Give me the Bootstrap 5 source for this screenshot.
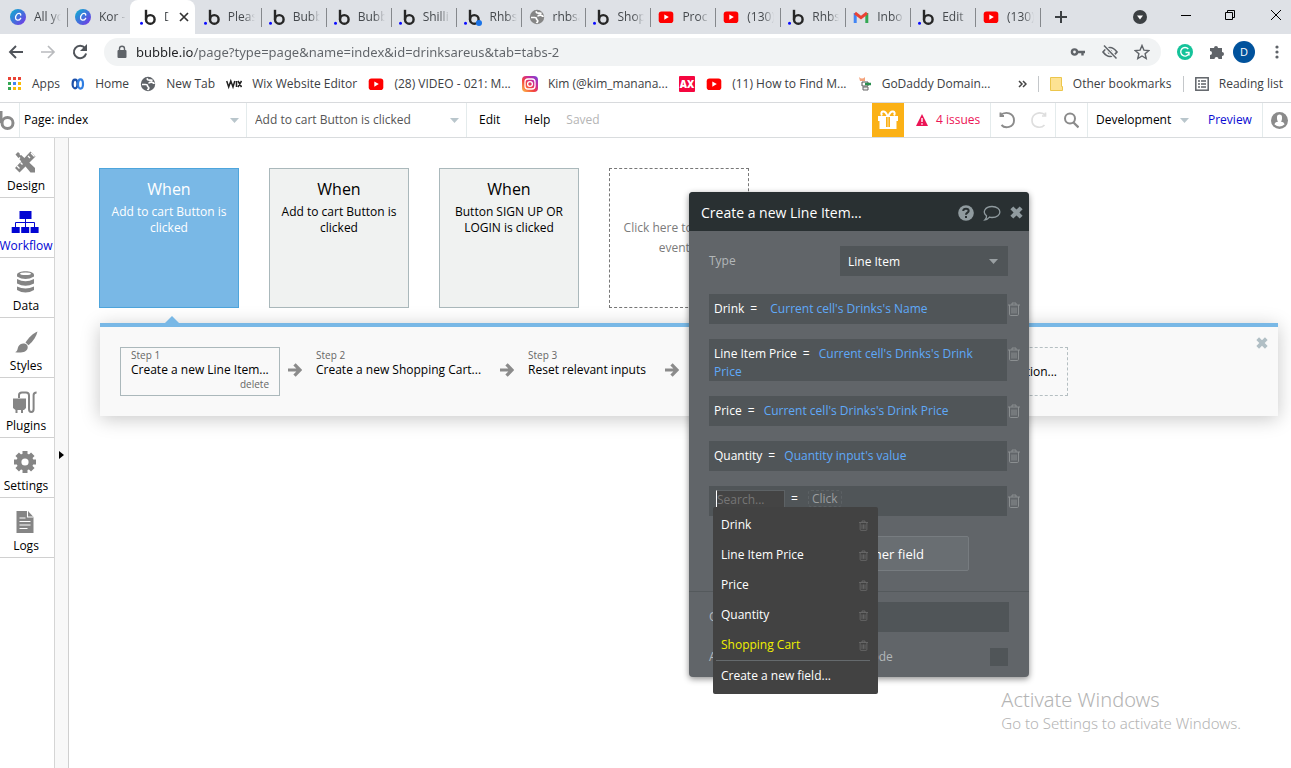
<!DOCTYPE html>
<html lang="en">
<head>
<meta charset="utf-8">
<meta name="viewport" content="width=device-width, initial-scale=1">
<title>Bubble workflow editor</title>
<link href="https://cdn.jsdelivr.net/npm/bootstrap@5.3.0/dist/css/bootstrap.min.css" rel="stylesheet">
<style>
body{font-family:"Open Sans",sans-serif;font-size:12px;line-height:16px;color:#000;background:#fff;overflow:hidden}
a{text-decoration:none}
button{border:0;background:none;padding:0;color:inherit}
svg{display:block;flex:none}
/* browser frame */
.tabstrip{background:#dee1e6;height:34px}
.btab{flex:1 1 0;min-width:0;height:34px;padding-left:10px;gap:8px;position:relative;color:#45494d}
.btab::after{content:"";position:absolute;right:-3px;top:8px;height:19px;width:1px;background:#85888c}
.btab.on{background:#fff;border-radius:8px 8px 0 0;margin-right:-1px}
.btab.on::after,.btab.plain::after{display:none}
.tabname{width:27px;overflow:hidden;white-space:nowrap;-webkit-mask-image:linear-gradient(90deg,#000 60%,transparent);mask-image:linear-gradient(90deg,#000 60%,transparent)}
.btab.on .tabname{width:5px}
.winctl{width:253px;height:34px}
.findtab{margin-left:32px}
.navrow{height:36px;padding:4px 8px 4px 8px}
.omni{background:#f1f3f4;border-radius:14px;height:28px;padding:0 11px 0 12px;color:#5f6368}
.omni input{border:0;outline:0;font-family:"Noto Sans",sans-serif;font-size:13px;color:transparent;padding:0;background:linear-gradient(90deg,#202124 58px,#5f6368 58px);-webkit-background-clip:text;background-clip:text}
.marks{height:33px;padding:0 8px;color:#3c4043;border-bottom:1px solid #d8dadd}
.marks a{color:inherit;white-space:nowrap;display:flex;align-items:center;gap:10px}
.vline{width:1px;height:16px;background:#c4c7ca}
/* editor bar */
.editbar{height:35px;border-bottom:1px solid #d9dcde}
.cell{border-right:1px solid #e4ebec;height:34px;display:flex;align-items:center}
select.flat{appearance:none;border:0;border-radius:0;outline:0;color:inherit;font:inherit;background:no-repeat right 7px center url("data:image/svg+xml,%3Csvg xmlns='http://www.w3.org/2000/svg' width='9' height='5'%3E%3Cpath d='M0 0h9L4.500 5z' fill='%23b9c6cc'/%3E%3C/svg%3E")}
.saved{color:#b5b5b5}
.gift{background:#fbb116;width:32px;height:34px}
/* left rail */
.rail{width:55px;border-right:1px solid #d5d5d5}
.rail a{height:60px;border-bottom:1px solid #d0d0d0;color:#000;display:flex;flex-direction:column;align-items:center;gap:4px;padding:12px 2px 0 0;font-size:12px;white-space:nowrap}
.rail a svg{margin-right:2px}
.rail a.on{color:#0205d3}
.gutter{width:14px;border-right:1px solid #cfcfcf;background:#f8f8f8;padding-top:312px}
/* canvas */
.canvas{padding:30px 13px 0 30px}
.evt{width:140px;height:140px;border:1px solid #aab8bb;background:#f0f2f1;padding:10px 8px;text-align:center;line-height:16px}
.evt b{display:block;font-weight:400;font-size:16px;line-height:20px;margin-bottom:5px}
.evt.on{background:#79b8e6;border-color:#4ea5dc;color:#fff}
.evt.add{border:1px dashed #777;background:none;color:#7b7b7b;line-height:20px;padding:49px 10px}
.steps{position:relative;margin:15px 0 0 1px;border-top:4px solid #79b8e6;background:#f9f9f9;height:93px;box-shadow:0 3px 18px rgba(0,0,0,.22);padding:20px 10px 0 20px}
.steps::before{content:"";position:absolute;left:65px;top:-11px;border:7px solid transparent;border-top:0;border-bottom-color:#79b8e6}
.step{height:49px;border:1px solid transparent;padding:1px 10px 0;line-height:16px;white-space:nowrap;text-align:left}
.step i{font-style:normal;display:block;font-size:10px;color:#666;line-height:13px}
.step i:last-child:not(:first-child){text-align:right}
.step.on{border-color:#abb8bb;width:160px}
.step.more{border:1px dashed #b5bfc2;margin:0 200px 0 auto}
.arrow{width:14px;margin:16px 9px 0 8px}
/* floating editor */
.prop{position:absolute;left:689px;top:192px;width:340px;height:485px;background:#616569;border-radius:4px;box-shadow:0 2px 6px rgba(0,0,0,.45);color:#b3b7b9}
.prophead{background:#293032;color:#fff;height:39px;border-radius:4px 4px 0 0;font-size:14px;padding:2px 6px 0 12px}
.prophead button{color:#909b9f}
.propbody{padding:15px 20px 0}
.prop select.flat{width:168px;height:30px;background-color:#505558;color:#fff;padding:2px 0 0 8px;background-position:right 10px center;background-image:url("data:image/svg+xml,%3Csvg xmlns='http://www.w3.org/2000/svg' width='9' height='5'%3E%3Cpath d='M0 0h9L4.500 5z' fill='%239aa0a3'/%3E%3C/svg%3E")}
.fld{background:#505558;min-height:30px;flex:1;color:#fff;line-height:18px;padding:6px 15px 0 5px;text-indent:0}
.fld a{color:#5fa9f8}
.fld b{font-weight:400;margin:0 6px}
.fldrow{margin:0 -11px 15px 0;gap:1px}
.fldrow>button{color:#8b8f91}
.search{width:69px;height:24px;border:1px solid #5d6265;background:#444;color:#fff;font-size:12px;padding:0 0 6px 0;border-left:1px solid #fff;outline:0;margin-left:2px}
.search::placeholder{color:#767676}
.clickhere{border:1px dashed #5d6265;border-radius:3px;color:#9a9d9f;padding:0 3px;line-height:15px}
.another{display:block;width:220px;height:35px;margin:20px auto;background:#696e72;border:1px solid #777c80;color:#fff;font-size:13px;border-radius:2px;text-align:right;padding-right:44px}
.when{border:0;background:#505558;height:30px;width:169px}
.brk{appearance:none;width:18px;height:18px;background:#505558;margin:0 1px 0 0}
.pick{position:absolute;left:713px;top:507px;width:165px;background:#424242;color:#fff;padding:3px 10px 3px 8px;margin:0;list-style:none;border-radius:2px}
.pick li{height:30px;display:flex;align-items:center;justify-content:space-between}
.pick li:last-child{border-top:1px solid #656a6d;height:31px;margin:0 -2px 0 -5px;padding-left:5px}
.pick svg{color:#707070}
.activate{position:absolute;right:50px;bottom:35px;color:#b4b4b4;font-family:"Noto Sans",sans-serif;font-size:15px;line-height:20px;font-weight:300}
.activate b{display:block;font-weight:300;font-size:20px;line-height:26px}
</style>
<script src="https://cdn.jsdelivr.net/npm/bootstrap@5.3.0/dist/js/bootstrap.bundle.min.js"></script>
</head>
<body class="vh-100 d-flex flex-column">
<svg width="0" height="0" class="position-absolute" aria-hidden="true">
<defs>
<linearGradient id="gc" x1="0" y1="0" x2="1" y2="1"><stop offset="0" stop-color="#08b5cf"/><stop offset="1" stop-color="#7a2fe8"/></linearGradient>
<linearGradient id="gi" x1="0" y1="1" x2="1" y2="0"><stop offset="0" stop-color="#fdc14b"/><stop offset=".4" stop-color="#f4433f"/><stop offset=".7" stop-color="#c32aa3"/><stop offset="1" stop-color="#6a4be0"/></linearGradient>
<symbol id="canva" viewBox="0 0 16 16"><circle cx="8" cy="8" r="8" fill="url(#gc)"/><path d="M10.700 6.200c.4-2-2.700-2.500-4.200-.4-1.500 2-1.300 5.200.9 5.400 1.500.1 2.600-.7 3.300-1.900" fill="none" stroke="#fff" stroke-width="1.300" stroke-linecap="round"/></symbol>
<symbol id="bub" viewBox="0 0 16 16"><circle cx="10.300" cy="10.400" r="4.300" fill="none" stroke="#262626" stroke-width="2.400"/><path d="M6 .8v9.600" stroke="#262626" stroke-width="2.400"/><circle cx="1.500" cy="14.300" r="1.500" fill="#0b0bff"/></symbol>
<symbol id="yt" viewBox="0 0 16 16"><rect x=".7" y="2.500" width="14.600" height="11.500" rx="2.800" fill="#f00"/><path d="M6.300 5.500v5.200l4.500-2.600z" fill="#fff"/></symbol>
<symbol id="globe" viewBox="0 0 16 16"><circle cx="8" cy="8" r="7.200" fill="currentColor"/><path d="M2 8.500h3.500c2 0 2 .5 2 1.500s1.300.7 1.300 2-.8 1-1.300 2M7.500 2.200c-.8 1.800 1 2 2 2s2-.5 3 .5M9 7.500c0-1 1.500-1.500 2.500-1.300s2.500.8 2.500 1.800" fill="none" stroke="#fff" stroke-width="1.700"/></symbol>
<symbol id="trash" viewBox="0 0 12 14"><path d="M0 3h12M4 3V1h4v2M1.500 3v9.300q0 1.200 1.200 1.200h6.600q1.200 0 1.200-1.200V3M4 5.500v6M6 5.500v6M8 5.500v6" fill="none" stroke="currentColor"/></symbol>
<symbol id="arr" viewBox="0 0 14 14"><path d="M0 7h11M6.500 1.300 12 7l-5.500 5.700" fill="none" stroke="#8b8b8b" stroke-width="3.200"/></symbol>
<symbol id="ex" viewBox="0 0 12 12"><path d="m1.700 1.700 8.600 8.600m0-8.600-8.600 8.600" stroke="currentColor" stroke-width="3.800"/></symbol>
</defs></svg>

<header>
<div class="tabstrip d-flex">
<div class="d-flex flex-grow-1">
<div class="btab d-flex align-items-center"><svg width="16" height="16"><use href="#canva"/></svg><span class="tabname">All yo</span></div>
<div class="btab plain d-flex align-items-center"><svg width="16" height="16"><use href="#canva"/></svg><span class="tabname">Kor -</span></div>
<div class="btab on d-flex align-items-center"><svg width="16" height="16"><use href="#bub"/></svg><span class="tabname">D</span><button aria-label="Close tab"><svg width="14" height="14" viewBox="0 0 14 14"><path d="m3 3 8 8m0-8-8 8" stroke="#333" stroke-width="1.700"/></svg></button></div>
<div class="btab d-flex align-items-center"><svg width="16" height="16"><use href="#bub"/></svg><span class="tabname">Pleas</span></div>
<div class="btab d-flex align-items-center"><svg width="16" height="16"><use href="#bub"/></svg><span class="tabname">Bubb</span></div>
<div class="btab d-flex align-items-center"><svg width="16" height="16"><use href="#bub"/></svg><span class="tabname">Bubb</span></div>
<div class="btab d-flex align-items-center"><svg width="16" height="16"><use href="#bub"/></svg><span class="tabname">Shilli</span></div>
<div class="btab d-flex align-items-center"><svg width="18" height="18" viewBox="0 0 18 18" class="me-n1"><use href="#bub" width="16" height="16" y="1"/><circle cx="15" cy="15" r="3" fill="#1a73e8"/></svg><span class="tabname">Rhbs</span></div>
<div class="btab d-flex align-items-center"><svg width="16" height="16" color="#858585"><use href="#globe"/></svg><span class="tabname">rhbsa</span></div>
<div class="btab d-flex align-items-center"><svg width="16" height="16"><use href="#bub"/></svg><span class="tabname">Shop</span></div>
<div class="btab d-flex align-items-center"><svg width="16" height="16"><use href="#yt"/></svg><span class="tabname">Proc</span></div>
<div class="btab d-flex align-items-center"><svg width="16" height="16"><use href="#yt"/></svg><span class="tabname">(130)</span></div>
<div class="btab d-flex align-items-center"><svg width="16" height="16"><use href="#bub"/></svg><span class="tabname">Rhbs</span></div>
<div class="btab d-flex align-items-center"><svg width="16" height="16" viewBox="0 0 16 16"><path d="M2.200 14V4" stroke="#4285f4" stroke-width="3"/><path d="M13.800 14V4" stroke="#34a853" stroke-width="3"/><path d="m2 4 6 4.600L14 4" fill="none" stroke="#ea4335" stroke-width="3"/></svg><span class="tabname">Inbo</span></div>
<div class="btab d-flex align-items-center"><svg width="16" height="16"><use href="#bub"/></svg><span class="tabname">Edit</span></div>
<div class="btab d-flex align-items-center"><svg width="16" height="16"><use href="#yt"/></svg><span class="tabname">(130)</span></div>
</div>
<div class="winctl d-flex align-items-center justify-content-between ps-3 pe-2">
<button aria-label="New tab"><svg width="14" height="14" viewBox="0 0 14 14"><path d="M7 1v12M1 7h12" stroke="#3c4043" stroke-width="2"/></svg></button>
<button class="findtab" aria-label="Search tabs"><svg width="14" height="14" viewBox="0 0 14 14"><circle cx="7" cy="7" r="7" fill="#3c4043"/><path d="M4 5.500h6L7 9.500z" fill="#fff"/></svg></button>
<button class="pb-1" aria-label="Minimize"><svg width="12" height="12" viewBox="0 0 12 12"><path d="M1 6.500h10" stroke="#000"/></svg></button>
<button class="pb-1" aria-label="Restore"><svg width="12" height="12" viewBox="0 0 12 12"><path d="M1.500 3.500h7v7h-7zM3.500 3V1.500h7v7H9" fill="none" stroke="#000"/></svg></button>
<button class="pb-1" aria-label="Close"><svg width="14" height="14" viewBox="0 0 14 14"><path d="m2 2 10 10m0-10L2 12" stroke="#000"/></svg></button>
</div>
</div>
<div class="navrow d-flex align-items-center">
<button aria-label="Back"><svg width="16" height="16" viewBox="0 0 16 16"><path d="M15 8H2m6-6L2 8l6 6" fill="none" stroke="#50545a" stroke-width="1.900"/></svg></button>
<button class="mx-3" aria-label="Forward"><svg width="16" height="16" viewBox="0 0 16 16"><path d="M1 8h13M8 2l6 6-6 6" fill="none" stroke="#b9bbbe" stroke-width="1.700"/></svg></button>
<button class="me-3" aria-label="Reload"><svg width="16" height="16" viewBox="0 0 16 16"><path d="M13 4.200A6.200 6.200 0 1 0 14.100 9.500" fill="none" stroke="#50545a" stroke-width="2"/><path d="M15 0v7H8z" fill="#50545a"/></svg></button>
<div class="omni d-flex align-items-center flex-grow-1">
<svg width="12" height="14" viewBox="0 0 12 14" class="me-2"><rect x="1.500" y="5" width="9" height="8" rx="1" fill="#5f6368"/><path d="M3.500 6V3.700a2.500 2.500 0 0 1 5 0V6" fill="none" stroke="#5f6368" stroke-width="1.400"/></svg>
<input class="flex-grow-1" aria-label="Address" value="bubble.io/page?type=page&amp;name=index&amp;id=drinksareus&amp;tab=tabs-2">
<svg width="16" height="16" viewBox="0 0 16 16" class="me-3"><circle cx="4.500" cy="8" r="2.600" fill="none" stroke="#5f6368" stroke-width="2.400"/><path d="M7 8h8M12.500 8v3.500" stroke="#5f6368" stroke-width="2.400"/></svg>
<svg width="16" height="16" viewBox="0 0 16 16" class="me-3"><path d="M1 8q7-9 14 0-7 9-14 0z" fill="none" stroke="#5f6368" stroke-width="1.700"/><circle cx="8" cy="8" r="2.300" fill="#5f6368"/><path d="m2 1.500 12.500 13" stroke="#f1f3f4" stroke-width="3.500"/><path d="m2 1.500 12.500 13" stroke="#5f6368" stroke-width="1.500"/></svg>
<svg width="16" height="16" viewBox="0 0 16 16"><path d="m8 1.500 1.900 4.600 4.900.4-3.700 3.200 1.100 4.800L8 12l-4.200 2.500 1.100-4.800L1.200 6.500l4.900-.4z" fill="none" stroke="#5f6368" stroke-width="1.400"/></svg>
</div>
<svg width="16" height="16" viewBox="0 0 16 16" class="ms-3"><circle cx="8" cy="8" r="8" fill="#15c39a"/><path d="M11.300 5A4.300 4.300 0 1 0 12 9.400M8.500 8.500H12v3" fill="none" stroke="#fff" stroke-width="1.400"/></svg>
<svg width="16" height="16" viewBox="0 0 16 16" class="ms-3"><path d="M1 4h4a2 2 0 1 1 4 0h4v4a2 2 0 1 1 0 4v3H9.500a2 2 0 0 0-4 0H1v-4a2 2 0 0 0 0-4z" fill="#5f6368"/></svg>
<svg width="22" height="22" viewBox="0 0 22 22" class="ms-2 me-3"><circle cx="11" cy="11" r="11" fill="#00529c"/><text x="11" y="15" font-size="11" fill="#fff" text-anchor="middle">D</text></svg>
<svg width="4" height="14" viewBox="0 0 4 14" fill="#5f6368" class="ms-1 me-1"><circle cx="2" cy="2" r="1.600"/><circle cx="2" cy="7" r="1.600"/><circle cx="2" cy="12" r="1.600"/></svg>
</div>
<nav class="marks d-flex align-items-center justify-content-between pb-1">
<a href="#"><svg width="14" height="14" viewBox="0 0 14 14"><path d="M0 0h3v3H0zM5 0h3v3H5zM10 0h3v3h-3z" fill="#ea4335"/><path d="M0 5h3v3H0zM0 10h3v3H0z" fill="#34a853"/><path d="M5 5h3v3H5z" fill="#4285f4"/><path d="M10 5h3v3h-3zM5 10h3v3H5zM10 10h3v3h-3z" fill="#fbbc05"/></svg>Apps</a>
<a href="#"><svg width="14" height="14" viewBox="0 0 14 14" fill="none" stroke-width="2.200"><ellipse cx="4" cy="7" rx="2.400" ry="4.300" stroke="#1c4fa8"/><ellipse cx="9.500" cy="7" rx="2.500" ry="4.600" stroke="#2f7de1"/></svg>Home</a>
<a href="#"><svg width="16" height="16" color="#5f6368"><use href="#globe"/></svg>New Tab</a>
<a href="#"><svg width="16" height="16" viewBox="0 0 16 16" fill="none" stroke="#222" stroke-width="1.500"><path d="m.7 5 2 6L4.800 5 7 11l1.800-6M10.500 5v6M12 5l3.500 6m0-6L12 11"/></svg>Wix Website Editor</a>
<a href="#"><svg width="16" height="16"><use href="#yt"/></svg>(28) VIDEO - 021: M...</a>
<a href="#"><svg width="16" height="16" viewBox="0 0 16 16"><rect width="16" height="16" rx="4" fill="url(#gi)"/><g fill="none" stroke="#fff" stroke-width="1.300"><rect x="3" y="3" width="10" height="10" rx="3"/><circle cx="8" cy="8" r="2.400"/></g></svg>Kim (@kim_manana...</a>
<a href="#" aria-label="AX"><svg width="16" height="16" viewBox="0 0 16 16"><rect width="16" height="16" rx="1" fill="#f5063f"/><text x="8" y="12" font-size="10" font-weight="800" fill="#fff" text-anchor="middle">AX</text></svg></a>
<a href="#"><svg width="16" height="16"><use href="#yt"/></svg>(11) How to Find M...</a>
<a href="#"><svg width="14" height="16" viewBox="0 0 14 16"><path d="M1 1q3 3 6 0v4H2z" fill="#f4a37c"/><path d="M4 6h6v4H4z" fill="#fff" stroke="#555"/><path d="M7 8h6" stroke="#2a8f4e" stroke-width="2.500"/><path d="M5 11h5v3H5z" fill="#eee" stroke="#666"/></svg>GoDaddy Domain...</a>
<button class="ms-3" aria-label="More bookmarks"><svg width="9" height="8" viewBox="0 0 9 8"><path d="m1 1 3 3-3 3m4-6 3 3-3 3" fill="none" stroke="#444" stroke-width="1.500"/></svg></button>
<span class="vline"></span>
<a href="#"><svg width="13" height="14" viewBox="0 0 13 14"><path d="M.5.500h11v9h1v4H.500z" fill="#fde293" stroke="#ecc64c"/></svg>Other bookmarks</a>
<span class="vline"></span>
<a href="#"><svg width="14" height="14" viewBox="0 0 14 14"><rect x=".8" y=".8" width="12.400" height="12.400" fill="none" stroke="#5f6368" stroke-width="1.500"/><path d="M3 4h2M6 4h5M3 7h2M6 7h5M3 10h2M6 10h5" stroke="#5f6368" stroke-width="1.500"/></svg>Reading list</a>
</nav>
</header>

<div class="editbar d-flex align-items-center">
<div class="cell" style="width:20px"><svg width="16" height="20" viewBox="0 0 16 20" fill="none" stroke="#8a8a8a" stroke-width="3"><circle cx="7.500" cy="13" r="5.500"/><path d="M1 1v12"/></svg></div>
<div class="cell" style="width:227px"><select class="flat w-100 h-100 ps-1" aria-label="Page"><option>Page: index</option></select></div>
<div class="cell" style="width:220px;color:#555"><select class="flat w-100 h-100 ps-2" aria-label="Event"><option>Add to cart Button is clicked</option></select></div>
<div class="d-flex ms-2 ps-1"><button class="me-4">Edit</button><button class="me-3">Help</button><span class="saved">Saved</span></div>
<div class="ms-auto d-flex align-items-center">
<button class="gift d-flex align-items-center justify-content-center" aria-label="Gift"><svg width="22" height="20" viewBox="0 0 22 20"><path d="M1 6h20v5H1zM2.500 11h17v8h-17z" fill="#fff"/><path d="M9 7h4v10H9z" fill="#fbb116"/><path d="M10 7h2v11h-2z" fill="#fff" opacity=".3"/><path d="M10.500 6C8-1 2.500 1 5 5.500M11.500 6C14-1 19.500 1 17 5.500" fill="none" stroke="#fff" stroke-width="2"/></svg></button>
<a href="#" class="cell px-2 gap-1" style="width:87px;color:#ec1455"><svg class="ms-1 me-1" width="12" height="12" viewBox="0 0 12 12"><path d="M6 0l6 12H0z" fill="#ec1455"/><path d="M6 4v4M6 9.200v1.500" stroke="#fff" stroke-width="1.400"/></svg>4 issues</a>
<div class="cell ps-2 pe-2 gap-3" style="width:65px"><button aria-label="Undo"><svg width="16" height="18" viewBox="0 0 16 18"><path d="M1 4.500C7-.7 15 2.500 15 9.500S6 18 2.500 14M1.500 1.500v3.500h3.500" fill="none" stroke="#8b8b8b" stroke-width="1.900"/></svg></button><button aria-label="Redo"><svg width="16" height="18" viewBox="0 0 16 18"><path d="M15 4.500C9-.7 1 2.500 1 9.500S10 18 13.500 14M14.500 1.500v3.500h-3.500" fill="none" stroke="#dedede" stroke-width="1.700"/></svg></button></div>
<button class="cell px-2" aria-label="Search"><svg width="15" height="17" viewBox="0 0 15 17"><circle cx="6" cy="6.500" r="5" fill="none" stroke="#8b8b8b" stroke-width="2"/><path d="m9.500 10.500 5 5" stroke="#8b8b8b" stroke-width="2.300"/></svg></button>
<select class="flat h-100 ps-2 ms-0" style="width:108px;padding-left:10px" aria-label="Version"><option>Development</option></select>
<a href="#" class="cell ps-2 me-2" style="width:67px;color:#0b0bd2"><span class="ps-1">Preview</span></a>
<a href="#" aria-label="Account"><svg width="17" height="17" viewBox="0 0 17 17" style="margin-right:3px"><circle cx="8.500" cy="8.500" r="8.500" fill="#8b8b8b"/><path d="M6 5a2.500 2.500 0 0 1 5 0v2q-.3 2-1.200 2.500 3.500.7 3.700 3-5 4-10 0 .2-2.300 3.700-3Q6.300 9 6 7z" fill="#fff"/></svg></a>
</div>
</div>

<div class="d-flex flex-grow-1" style="min-height:0">
<nav class="rail flex-shrink-0">
<a href="#"><svg width="24" height="24" viewBox="0 0 24 24"><path d="M2.500 4.500l2.500-2.500 17 16v4.500h-4.500z" fill="#858585"/><path d="M17.500 1.500l5 5L6.500 22.500 2 18z" fill="#858585"/><path d="m4.500 10 2.500-2.500M7 5l2-2M18 3l3.500 3.500M15 6l2 2M4 16l2.500 2.500m1-6 2 2" stroke="#fff" stroke-width="1.300"/></svg>Design</a>
<a href="#" class="on"><svg width="28" height="24" viewBox="0 0 28 24"><path d="M8.500 1h12v8h-12zM.7 17h8v6h-8zM10.200 17h8v6h-8zM19.600 17h8v6h-8z" fill="#0205d3"/><path d="M14.500 9v8M4.500 17v-4.500h19V17" fill="none" stroke="#0205d3"/></svg>Workflow</a>
<a href="#"><svg width="24" height="24" viewBox="0 0 24 24" fill="#858585"><path d="M4 5c0-5 17-5 17 0v1.500q-8.500 5-17 0zM4 9q8.500 4.500 17 0v4.500q-8.500 4.500-17 0zM4 16.500q8.500 4 17 0V20q-8.500 5-17 0z"/><ellipse cx="12.500" cy="3.800" rx="5.500" ry="1.300" fill="#fff"/></svg>Data</a>
<a href="#"><svg width="26" height="24" viewBox="0 0 26 24" fill="#858585"><path d="M25.500 1.500c-4 1.500-9 6-12 11l3 2.800c5-4 8-9.300 9-13.800z"/><path d="M12.500 13.500c4 .8 4.500 6 .5 8-3 1.500-8 1-10 .7 3-1 2.200-3.500 3.500-6 1-2 3.500-3.200 6-2.700z"/></svg>Styles</a>
<a href="#"><svg width="26" height="24" viewBox="0 0 26 24"><path d="M1 8.500h13v9.500l-2 2H3.500L1 18z" fill="#858585"/><path d="M4.500 20v3M10 20v3M7 8V5q0-2.500 3-2.500h4q3 0 3 3V19q0 3 2.300 3t2.300-3V5q0-2.500 3-2.500" fill="none" stroke="#858585" stroke-width="2"/></svg>Plugins</a>
<a href="#"><svg width="24" height="24" viewBox="0 0 24 24"><g stroke="#858585" stroke-width="5"><path d="M12 1v22M1 12h22M4.200 4.200l15.600 15.600M19.800 4.200 4.200 19.800"/></g><circle cx="12" cy="12" r="8.500" fill="#858585"/><circle cx="12" cy="12" r="3.600" fill="#fff"/></svg>Settings</a>
<a href="#"><svg width="20" height="24" viewBox="0 0 20 24"><path d="M1.500 1h11.500l5.500 6v16h-17z" fill="#858585"/><path d="M12.500 1v6h6M4.500 8h6M4.500 11.500h11M4.500 15h11M4.500 18.500h8" fill="none" stroke="#fff" stroke-width="1.100"/></svg>Logs</a>
</nav>
<div class="gutter flex-shrink-0"><svg class="ms-1" width="5" height="10" viewBox="0 0 5 10"><path d="M0 1l5 4-5 4z"/></svg></div>
<main class="canvas flex-grow-1">
<div class="d-flex" style="gap:30px">
<div class="evt on"><b>When</b>Add to cart Button is clicked</div>
<div class="evt"><b>When</b>Add to cart Button is clicked</div>
<div class="evt"><b>When</b>Button SIGN UP OR LOGIN is clicked</div>
<div class="evt add">Click here to add an event...</div>
</div>
<div class="steps d-flex align-items-start">
<div class="step on"><i>Step 1</i>Create a new Line Item...<i>delete</i></div><svg class="arrow" height="14"><use href="#arr"/></svg>
<div class="step ps-1"><i>Step 2</i>Create a new Shopping Cart...</div><svg class="arrow" height="14"><use href="#arr"/></svg>
<div class="step ps-1"><i>Step 3</i>Reset relevant inputs</div><svg class="arrow" height="14"><use href="#arr"/></svg>
<button class="step more">Click here to add an action...</button>
<button class="position-absolute" style="right:10px;top:10px;color:#b1bfc5" aria-label="Close steps"><svg width="12" height="12"><use href="#ex"/></svg></button>
</div>
</main>
</div>

<section class="prop">
<div class="prophead d-flex align-items-center"><span class="me-auto">Create a new Line Item...</span>
<button aria-label="Help"><svg width="16" height="16" viewBox="0 0 16 16"><circle cx="8" cy="8" r="7.800" fill="currentColor"/><path d="M5.200 6q.2-2.200 2.800-2.200T10.700 6C10.700 7.700 8 7.700 8 9.700M8 11v2" fill="none" stroke="#293032" stroke-width="2"/></svg></button>
<button class="mx-2" aria-label="Comment"><svg width="20" height="16" viewBox="0 0 18 16"><path d="M9 1.500c10.500 0 10.500 11 0 11q-1.500 0-2.500-.4Q4.500 14.500 2 14.800q1.700-1.600 1.500-4C-1 7 2 1.500 9 1.500z" fill="none" stroke="currentColor" stroke-width="1.300"/></svg></button>
<button aria-label="Close"><svg width="13" height="13"><use href="#ex"/></svg></button></div>
<div class="propbody">
<div class="d-flex align-items-center justify-content-between" style="margin:0 1px 18px 0"><label for="type">Type</label><select id="type" class="flat"><option>Line Item</option></select></div>
<div class="fldrow d-flex align-items-center"><div class="fld">Drink<b>=</b> <a href="#" class="ms-1">Current cell's Drinks's Name</a></div><button aria-label="Delete field"><svg width="12" height="14"><use href="#trash"/></svg></button></div>
<div class="fldrow d-flex align-items-start"><div class="fld">Line Item Price<b>=</b> <a href="#">Current cell's Drinks's Drink Price</a></div><button class="pt-2" aria-label="Delete field"><svg width="12" height="14"><use href="#trash"/></svg></button></div>
<div class="fldrow d-flex align-items-center"><div class="fld">Price<b>=</b> <a href="#">Current cell's Drinks's Drink Price</a></div><button aria-label="Delete field"><svg width="12" height="14"><use href="#trash"/></svg></button></div>
<div class="fldrow d-flex align-items-center"><div class="fld">Quantity<b>=</b> <a href="#">Quantity input's value</a></div><button aria-label="Delete field"><svg width="12" height="14"><use href="#trash"/></svg></button></div>
<div class="fldrow d-flex align-items-center"><div class="fld d-flex align-items-start pt-1" style="height:30px"><input class="search" placeholder="Search..." aria-label="Search fields"><b>=</b><span class="clickhere ms-1">Click</span></div><button aria-label="Delete field"><svg width="12" height="14"><use href="#trash"/></svg></button></div>
<button class="another">Set another field</button>
</div>
<div style="border-top:1px solid #54595c;padding:10px 20px 0">
<div class="d-flex align-items-center justify-content-between"><label for="when">Only when</label><input id="when" class="when"></div>
<div class="d-flex align-items-center justify-content-between mt-3"><label for="brk">Add a breakpoint in debug mode</label><input id="brk" type="checkbox" class="brk"></div>
</div>
</section>
<ul class="pick">
<li>Drink<svg width="9" height="11"><use href="#trash"/></svg></li>
<li>Line Item Price<svg width="9" height="11"><use href="#trash"/></svg></li>
<li>Price<svg width="9" height="11"><use href="#trash"/></svg></li>
<li>Quantity<svg width="9" height="11"><use href="#trash"/></svg></li>
<li style="color:#f0f000">Shopping Cart<svg width="9" height="11"><use href="#trash"/></svg></li>
<li>Create a new field...</li>
</ul>
<div class="activate"><b>Activate Windows</b>Go to Settings to activate Windows.</div>
</body>
</html>
